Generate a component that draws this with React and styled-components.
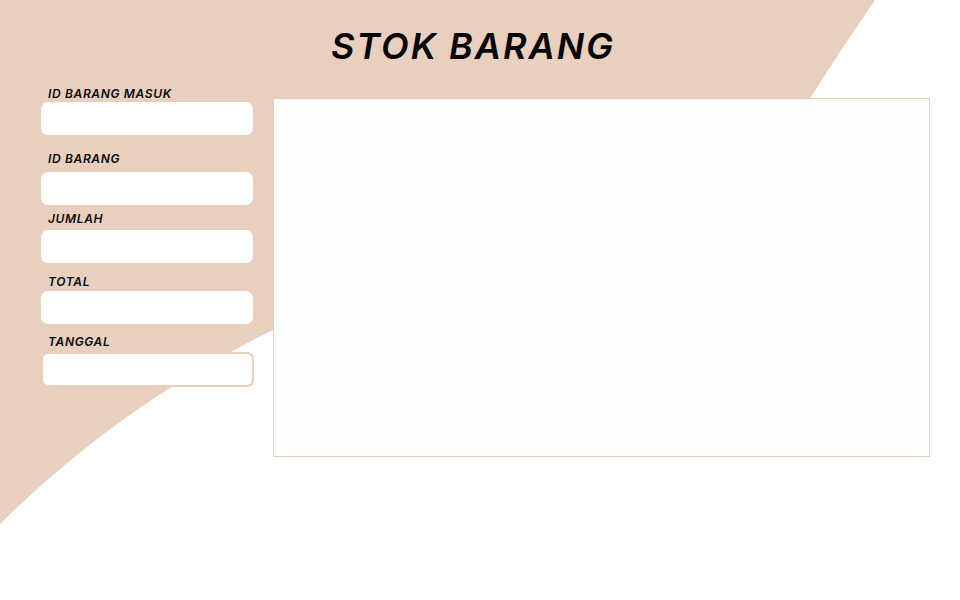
import React from "react";
import styled, { createGlobalStyle } from "styled-components";

const Global = createGlobalStyle`
  html, body { margin: 0; padding: 0; background: #ffffff; }
  body { font-family: Inter, "Noto Sans", sans-serif; }
`;

const Page = styled.div`
  position: relative;
  width: 960px;
  height: 600px;
  overflow: hidden;
  background: #ffffff;
`;

const Backdrop = styled.svg`
  position: absolute;
  inset: 0;
  z-index: 0;
`;

const Content = styled.div`
  position: relative;
  z-index: 1;
  display: flex;
  flex-direction: column;
`;

const Title = styled.h1`
  margin: 25px 0 0 0;
  text-align: center;
  font-family: Inter, sans-serif;
  font-style: italic;
  font-weight: 600;
  font-size: 36px;
  line-height: 42px;
  letter-spacing: 2px;
  color: #050505;
  padding-right: 14px;
`;

const Row = styled.div`
  display: flex;
  align-items: flex-start;
  gap: 19px;
  padding-left: 41px;
  margin-top: 20px;
`;

const Form = styled.form`
  display: flex;
  flex-direction: column;
  width: 213px;
`;

const Field = styled.div`
  display: flex;
  flex-direction: column;
  margin-top: ${(p) => p.$gap}px;
`;

const Label = styled.label`
  font-family: Inter, sans-serif;
  font-style: italic;
  font-weight: 600;
  font-size: 12px;
  line-height: 14px;
  letter-spacing: 0.65px;
  color: #0a0a0a;
  padding-left: 7px;
  margin-bottom: ${(p) => p.$space}px;
`;

const Input = styled.input`
  box-sizing: border-box;
  width: ${(p) => (p.$outlined ? 213 : 212)}px;
  height: ${(p) => (p.$outlined ? 35 : 33)}px;
  margin: 0;
  border: ${(p) => (p.$outlined ? "2px solid #e8cfbe" : "none")};
  border-radius: 7px;
  background: #ffffff;
  outline: none;
  padding: 0 8px;
  font-family: Inter, sans-serif;
  font-size: 13px;
`;

const Panel = styled.div`
  box-sizing: border-box;
  width: 657px;
  height: 359px;
  margin-top: 11px;
  border: 1px solid #e6cdbb;
  background: #fefefe;
`;

const fields = [
  { label: "ID BARANG MASUK", gap: 0, space: 1 },
  { label: "ID BARANG", gap: 17, space: 6 },
  { label: "JUMLAH", gap: 7, space: 4 },
  { label: "TOTAL", gap: 12, space: 2 },
  { label: "TANGGAL", gap: 11, space: 3, outlined: true },
];

export default function App() {
  return (
    <>
      <Global />
      <Page>
        <Backdrop width="960" height="600" viewBox="0 0 960 600">
          <path
            d="M0 0 L875 0 Q842 48 810 98 L700 200 L273 330 Q120 405 0 524 Z"
            fill="#e8cfbe"
          />
        </Backdrop>
        <Content>
          <Title>STOK BARANG</Title>
          <Row>
            <Form>
              {fields.map((f) => (
                <Field key={f.label} $gap={f.gap}>
                  <Label $space={f.space}>{f.label}</Label>
                  <Input $outlined={f.outlined} />
                </Field>
              ))}
            </Form>
            <Panel />
          </Row>
        </Content>
      </Page>
    </>
  );
}
